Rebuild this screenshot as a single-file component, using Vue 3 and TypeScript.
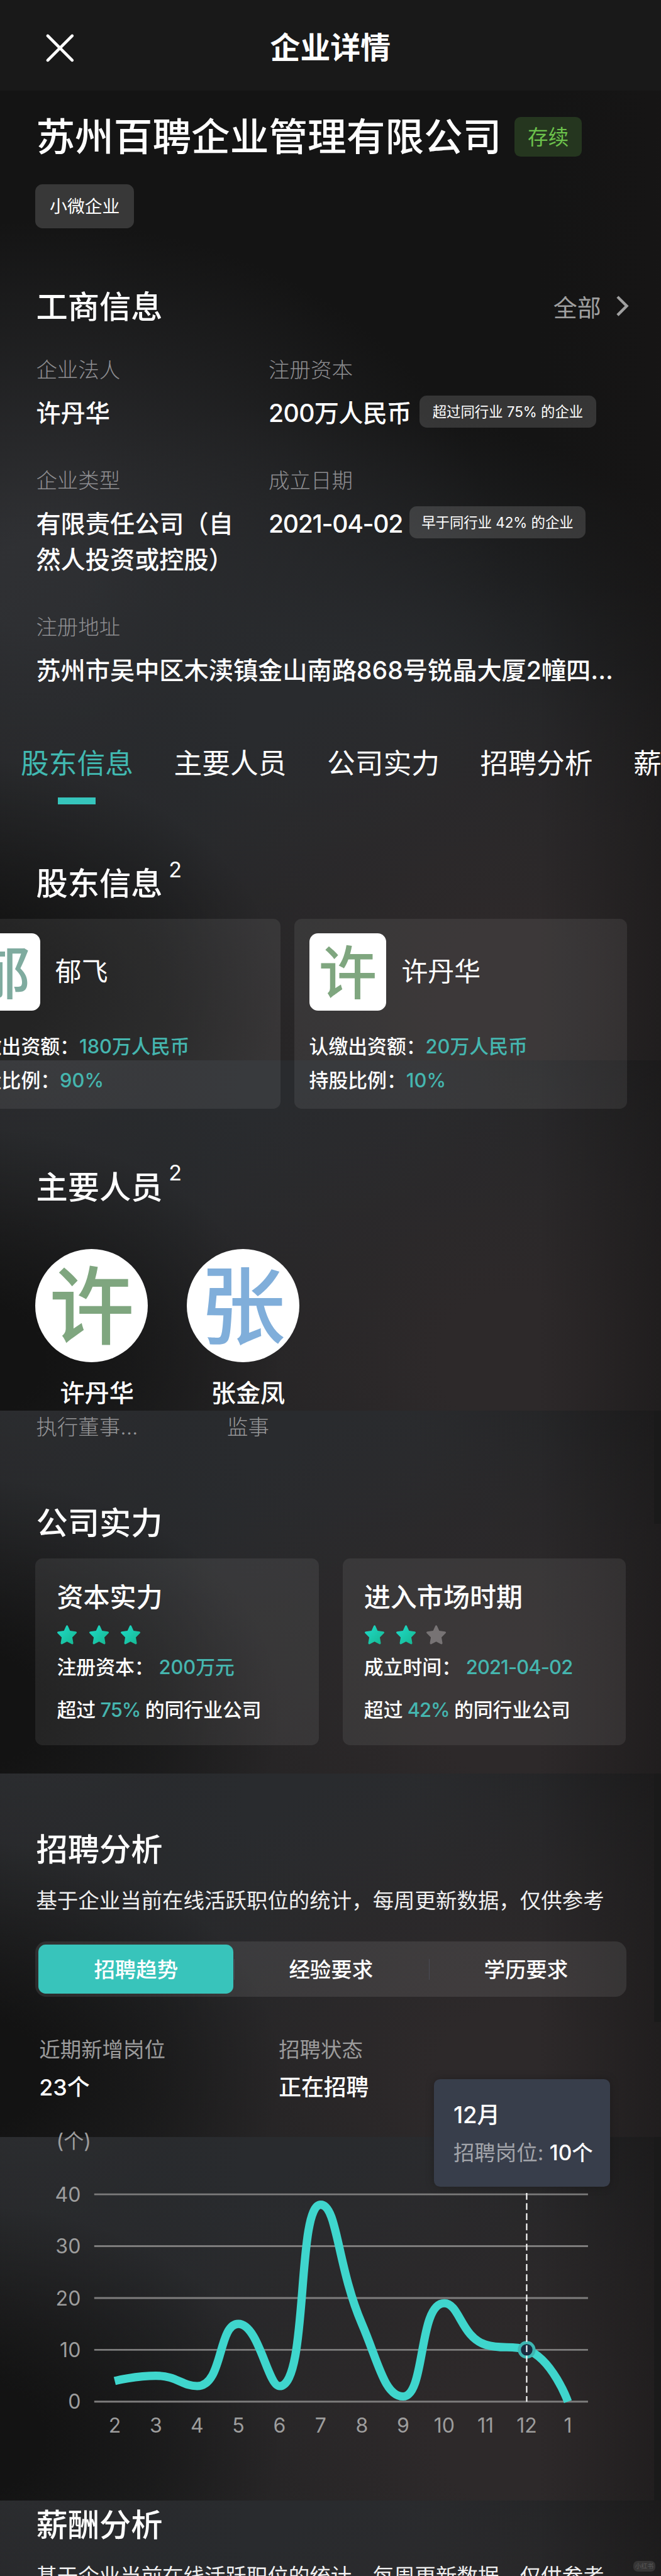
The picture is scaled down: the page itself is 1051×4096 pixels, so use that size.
<script setup lang="ts">
interface Person { name: string; role: string; initial: string; color: string; clipped: boolean }
interface Holder { name: string; initial: string; color: string; amount: string; ratio: string }
interface Strength { title: string; stars: boolean[]; label: string; value: string; percent: string; date: boolean }

const tabs = ['股东信息', '主要人员', '公司实力', '招聘分析', '薪酬分析']

const holders: Holder[] = [
  { name: '郁飞', initial: '郁', color: '#7fab9f', amount: '180万人民币', ratio: '90%' },
  { name: '许丹华', initial: '许', color: '#7fa67f', amount: '20万人民币', ratio: '10%' },
]

const people: Person[] = [
  { name: '许丹华', role: '执行董事...', initial: '许', color: '#7fa67f', clipped: true },
  { name: '张金凤', role: '监事', initial: '张', color: '#80aeda', clipped: false },
]

const strengths: Strength[] = [
  { title: '资本实力', stars: [true, true, true], label: '注册资本：', value: '200万元', percent: '75%', date: false },
  { title: '进入市场时期', stars: [true, true, false], label: '成立时间：', value: '2021-04-02', percent: '42%', date: true },
]

const segments = ['招聘趋势', '经验要求', '学历要求']

const months = ['2', '3', '4', '5', '6', '7', '8', '9', '10', '11', '12', '1']
const values = [4, 5, 3, 15, 3, 38, 15, 1, 19, 11, 10, 0]
const ticks = [40, 30, 20, 10, 0]

const baseY = 488
const unit = 8.47
const monthX = (i: number): number => 187.5 + i * 67.33
const valueY = (v: number): number => baseY - v * unit

const clamp = (v: number, a: number, b: number): number =>
  Math.min(Math.max(v, Math.min(a, b)), Math.max(a, b))

// Smooth cubic path whose control points never overshoot the neighbouring values
function smoothPath(points: [number, number][], smooth = 0.5): string {
  let d = `M${points[0][0]} ${points[0][1]}`
  let [c0x, c0y] = points[0]
  for (let i = 1; i < points.length; i++) {
    const [px, py] = points[i - 1]
    const [x, y] = points[i]
    let c1x = x
    let c1y = y
    let n0x = x
    let n0y = y
    if (i < points.length - 1) {
      const [nx, ny] = points[i + 1]
      const prev = Math.hypot(x - px, y - py)
      const next = Math.hypot(nx - x, ny - y)
      const ratio = next / (next + prev)
      n0x = clamp(x + (nx - px) * smooth * ratio, nx, x)
      n0y = clamp(y + (ny - py) * smooth * ratio, ny, y)
      c1x = clamp(x - ((n0x - x) * prev) / next, px, x)
      c1y = clamp(y - ((n0y - y) * prev) / next, py, y)
      n0x = x + ((x - c1x) * next) / prev
      n0y = y + ((y - c1y) * next) / prev
    }
    d += `C${c0x} ${c0y} ${c1x} ${c1y} ${x} ${y}`
    c0x = n0x
    c0y = n0y
  }
  return d
}

const trend = smoothPath(values.map((v, i) => [monthX(i), valueY(v)] as [number, number]))
</script>

<template>
  <div class="page">
    <div class="backdrop" aria-hidden="true">
      <div class="scene scene-top"></div>
      <div class="scene scene-a"></div>
      <div class="scene scene-b"><i class="edge edge-short"></i></div>
      <div class="scene scene-b"><i class="edge edge-mid"></i></div>
      <div class="scene scene-b"><i class="edge"></i></div>
      <div class="scene scene-end"></div>
    </div>

    <header class="bar">
      <svg class="close" viewBox="0 0 48 48"><path d="M4 4L44 44M44 4L4 44" /></svg>
      <h1>企业详情</h1>
    </header>

    <main>
      <div class="company">
        <span class="company-name">苏州百聘企业管理有限公司</span>
        <span class="status">存续</span>
      </div>
      <div class="tag">小微企业</div>

      <div class="heading heading-info">
        <h2>工商信息</h2>
        <span class="more">全部
          <svg viewBox="0 0 22 34"><path d="M3 2L18 17L3 32" /></svg>
        </span>
      </div>

      <div class="info">
        <div class="cell">
          <div class="label">企业法人</div>
          <div class="value">许丹华</div>
        </div>
        <div class="cell">
          <div class="label">注册资本</div>
          <div class="value with-pill"><span class="capital">200万人民币</span><span class="pill">超过同行业 75% 的企业</span></div>
        </div>
        <div class="cell">
          <div class="label">企业类型</div>
          <div class="value">有限责任公司（自<br>然人投资或控股）</div>
        </div>
        <div class="cell">
          <div class="label">成立日期</div>
          <div class="value with-pill"><span class="founded">2021-04-02</span><span class="pill">早于同行业 42% 的企业</span></div>
        </div>
        <div class="cell wide">
          <div class="label">注册地址</div>
          <div class="value nowrap">苏州市吴中区木渎镇金山南路868号锐晶大厦2幢四...</div>
        </div>
      </div>

      <nav class="tabs">
        <span v-for="(tab, i) in tabs" :key="tab" class="tab" :class="{ active: i === 0 }">{{ tab }}</span>
      </nav>

      <div class="heading heading-next"><h2>股东信息</h2><sup>2</sup></div>
      <div class="holders">
        <div v-for="h in holders" :key="h.name" class="card holder">
          <div class="holder-top">
            <span class="square" :style="{ color: h.color }">{{ h.initial }}</span>
            <span class="holder-name">{{ h.name }}</span>
          </div>
          <div class="holder-rows">
            <div>认缴出资额：<em>{{ h.amount }}</em></div>
            <div>持股比例：<em>{{ h.ratio }}</em></div>
          </div>
        </div>
      </div>

      <div class="heading heading-next"><h2>主要人员</h2><sup>2</sup></div>
      <div class="people">
        <div v-for="p in people" :key="p.name" class="person">
          <span class="circle" :style="{ color: p.color }">{{ p.initial }}</span>
          <span class="person-name">{{ p.name }}</span>
          <span class="role" :class="{ clipped: p.clipped }">{{ p.role }}</span>
        </div>
      </div>

      <div class="heading heading-next"><h2>公司实力</h2></div>
      <div class="strengths">
        <div v-for="s in strengths" :key="s.title" class="card strength">
          <h3>{{ s.title }}</h3>
          <div class="stars">
            <svg v-for="(on, i) in s.stars" :key="i" :class="{ off: !on }" viewBox="0 0 34 32">
              <defs>
                <linearGradient id="star-fill" x1="0" y1="0" x2="1" y2="1">
                  <stop offset="0" stop-color="#1fdccb" />
                  <stop offset="1" stop-color="#16b68f" />
                </linearGradient>
              </defs>
              <path d="M15.6 1.2Q17 -.8 18.400 1.200L22 9.300L31.300 10.600Q34 11.300 32.300 13.400L25.700 20L27.300 29.200Q27.400 32 24.800 31L17 27L9.200 31Q6.600 32 6.700 29.200L8.300 20L1.700 13.400Q0 11.300 2.700 10.600L12 9.300Z" />
            </svg>
          </div>
          <div class="line">{{ s.label }}<em class="spaced" :class="{ date: s.date }">{{ s.value }}</em></div>
          <div class="line line-last">超过 <em>{{ s.percent }}</em> 的同行业公司</div>
        </div>
      </div>

      <div class="heading heading-jobs"><h2>招聘分析</h2></div>
      <p class="note">基于企业当前在线活跃职位的统计，每周更新数据，仅供参考</p>
      <div class="segmented">
        <span v-for="(s, i) in segments" :key="s" :class="{ on: i === 0 }">{{ s }}</span>
      </div>

      <div class="stats">
        <div>
          <div class="stat-label">近期新增岗位</div>
          <div class="stat-value">23个</div>
        </div>
        <div>
          <div class="stat-label">招聘状态</div>
          <div class="stat-value">正在招聘</div>
        </div>
      </div>

      <div class="chart">
        <svg width="1080" height="554" viewBox="0 0 1080 554">
          <text class="axis" x="92" y="74">(个)</text>
          <g v-for="t in ticks" :key="t">
            <line class="rule" x1="154" x2="961" :y1="valueY(t)" :y2="valueY(t)" />
            <text class="axis" text-anchor="end" x="132" :y="valueY(t) + 12">{{ t }}</text>
          </g>
          <text v-for="(m, i) in months" :key="m" class="axis" text-anchor="middle" :x="monthX(i)" y="539">{{ m }}</text>
          <path class="trend" :d="trend" />
          <circle class="dot" :cx="monthX(10)" :cy="valueY(10)" r="12" />
          <line class="pointer" :x1="monthX(10)" :x2="monthX(10)" y1="147" y2="488" />
        </svg>
        <div class="tooltip">
          <div class="tip-title">12月</div>
          <div class="tip-row">招聘岗位: <b>10个</b></div>
        </div>
      </div>

      <div class="heading heading-pay"><h2>薪酬分析</h2></div>
      <p class="note">基于企业当前在线活跃职位的统计，每周更新数据，仅供参考</p>
    </main>
    <span class="watermark">小红书</span>
  </div>
</template>

<style>
html, body { margin: 0; background: #141414; overflow: hidden; }
</style>

<style scoped>
.page {
  zoom: 0.9729;
  position: relative;
  height: 4210px;
  overflow: hidden;
  background: #141414;
  color: #fff;
  font-family: Inter, "Noto Sans CJK SC", sans-serif;
  font-weight: 400;
}
h1, h2, h3, p { margin: 0; font-weight: 500; }
em, b { font-style: normal; font-weight: inherit; }
.backdrop { position: absolute; inset: 0; display: flex; flex-direction: column; }
.scene {
  position: relative;
  flex: none;
  background-color: #141414;
  background-image:
    radial-gradient(ellipse 520px 380px at -60px 1620px, #131313 25%, rgba(19, 19, 19, 0)),
    linear-gradient(90deg, rgba(24, 22, 22, 0) 880px, rgba(24, 22, 22, .55) 1080px),
    radial-gradient(ellipse 620px 560px at 840px 1620px, #2d292a 20%, rgba(45, 41, 42, 0)),
    radial-gradient(ellipse 720px 520px at 540px 1180px, #292b2e 20%, rgba(41, 43, 46, 0)),
    radial-gradient(ellipse 760px 600px at 60px 960px, #303134 12%, rgba(48, 49, 52, 0)),
    linear-gradient(180deg, rgba(34, 34, 35, 0) 950px, #222223 1350px);
  background-size: 1080px 1760px;
  background-repeat: no-repeat;
  background-position: 0 -1130px;
}
.scene-top { height: 1733px; background-position: 0 0; }
.scene-a { height: 572px; }
.scene-b { height: 594px; }
.scene-end { height: 124px; }
.edge { position: absolute; right: 0; top: 0; width: 11px; height: 100%; background: #1a1a1a; }
.edge-short { height: 185px; }
.edge-mid { height: 406px; }

.bar {
  position: relative;
  height: 148px;
  padding-top: 9px;
  box-sizing: border-box;
  display: flex;
  align-items: center;
  background: #191919;
}
.close { width: 48px; height: 48px; margin-left: 74px; fill: none; stroke: #fff; stroke-width: 4.800; stroke-linecap: round; }
.bar h1 { width: 836px; text-align: center; font-size: 49.200px; line-height: 60px; font-weight: 600; }

main { position: relative; padding: 43px 56px 0 59px; }
.company { display: flex; align-items: center; height: 65px; }
.company-name { font-size: 63.400px; font-weight: 500; width: 782px; white-space: nowrap; line-height: 67px; }
.status { width: 110px; height: 65px; line-height: 66px; text-align: center; font-size: 33.500px; color: #6cc24c; background: #25361f; border-radius: 10px; }
.tag { margin: 45px 0 0 -1px; width: 161px; height: 72px; line-height: 73px; text-align: center; font-size: 28.600px; background: #383838; border-radius: 12px; }

.heading { display: flex; height: 60px; align-items: center; }
.heading h2 { font-size: 51.700px; line-height: 60px; padding-top: 3px; }
.heading sup { font-size: 35px; line-height: 40px; vertical-align: baseline; margin: 0 0 42px 10px; font-weight: 400; }
.heading-info { margin-top: 97px; justify-content: space-between; }
.heading-next { margin-top: 97px; }
.more { display: flex; align-items: center; gap: 24px; font-size: 39px; color: #a0a0a0; margin-right: -4px; }
.more svg { width: 22px; height: 34px; fill: none; stroke: #a0a0a0; stroke-width: 4.500; }

.info { display: grid; grid-template-columns: 380px 1fr; row-gap: 61px; margin-top: 55px; }
.wide { grid-column: 1 / 3; }
.label { font-size: 34.400px; line-height: 40px; color: #8f8f92; font-weight: 300; }
.value { font-size: 40.300px; line-height: 58px; margin-top: 22px; font-weight: 500; }
.nowrap { white-space: nowrap; }
.with-pill { display: flex; }
.capital { width: 247px; white-space: nowrap; letter-spacing: -.7px; }
.founded { width: 230px; white-space: nowrap; letter-spacing: -1.400px; }
.pill { height: 52px; line-height: 53px; margin-top: 0; width: 288px; text-align: center; font-size: 23px; font-weight: 400; white-space: nowrap; background: rgba(255, 255, 255, .14); border-radius: 12px; }

.tabs { display: flex; gap: 66.300px; margin: 93px -56px 0 -25px; overflow: hidden; height: 98px; }
.tab { position: relative; flex: none; font-size: 46px; line-height: 61px; white-space: nowrap; }
.active { color: #41b9b1; }
.active::after { content: ""; position: absolute; left: 61px; top: 85px; width: 61px; height: 12px; background: #36c5bc; }

.card { background: rgba(255, 255, 255, .075); border-radius: 12px; box-sizing: border-box; }
.holders { display: flex; justify-content: flex-end; gap: 23px; margin: 29px 0 0 -59px; overflow: hidden; }
.holder { flex: none; width: 543px; height: 310px; padding: 23px 24px; }
.holder-top { display: flex; align-items: center; gap: 25px; }
.square { width: 126px; height: 127px; line-height: 130px; text-align: center; border-radius: 14px; background: #fff; font-size: 95px; font-weight: 500; }
.holder-name { font-size: 43px; line-height: 60px; }
.holder-rows { margin-top: 31px; font-size: 31.700px; line-height: 55.500px; white-space: nowrap; font-weight: 500; }
.holder-rows em, .line em { color: #45b6af; }

.people { display: flex; gap: 46px; margin: 73px 0 0 -1px; }
.person { width: 201px; display: flex; flex-direction: column; }
.circle { width: 184px; height: 185px; line-height: 190px; text-align: center; border-radius: 50%; background: #fff; font-size: 139px; font-weight: 500; }
.person-name { margin-top: 22px; font-size: 40.300px; line-height: 56px; text-align: center; font-weight: 500; }
.role { font-size: 34.400px; line-height: 56px; text-align: center; color: #959597; font-weight: 300; }
.clipped { text-align: left; padding-left: 1px; }

.strengths { display: flex; gap: 39px; margin: 29px 0 0 -1px; }
.strength { width: 463px; height: 306px; padding: 39px 35px; white-space: nowrap; }
.strength h3 { font-size: 43.200px; line-height: 50px; font-weight: 500; }
.stars { display: flex; gap: 17.500px; margin-top: 20px; height: 32px; }
.stars svg { width: 34px; height: 32px; fill: url(#star-fill); }
.stars .off { fill: #777374; margin-left: -2px; }
.line { margin-top: 18px; font-size: 31.700px; line-height: 40px; font-weight: 500; }
.line-last { margin-top: 29px; word-spacing: -1px; }
.line-last em { letter-spacing: -1px; }
.spaced { margin-left: 8px; }
.date { letter-spacing: -.9px; }

.heading-jobs { margin-top: 139px; }
.note { margin-top: 30px; font-size: 34.400px; line-height: 50px; font-weight: 400; color: #f0f0f0; white-space: nowrap; }
.segmented { display: flex; margin: 41px 0 0 -1px; width: 966px; height: 91px; padding: 5px; box-sizing: border-box; border-radius: 18px; background: rgba(255, 255, 255, .09); }
.segmented span { position: relative; flex: 1; height: 81px; line-height: 84px; text-align: center; font-size: 34.400px; font-weight: 500; border-radius: 12px; }
.segmented .on { background: #38c4bb; }
.segmented span + span::before { content: ""; position: absolute; left: 1px; top: 24px; height: 34px; width: 1px; background: #4a4b55; }

.stats { display: flex; margin-top: 65px; padding-left: 5px; }
.stats > div { width: 391.500px; }
.stat-label { font-size: 34.400px; line-height: 44px; color: #9b9b9b; }
.stat-value { margin-top: 14px; font-size: 36.800px; line-height: 50px; font-weight: 500; }

.chart { position: relative; height: 554px; margin: 0 -56px 0 -59px; }
.chart svg { display: block; }
.axis { font-size: 33px; fill: #9d9d9d; }
.rule { stroke: #7d7c7c; stroke-width: 3; }
.trend { fill: none; stroke: #3fd6cd; stroke-width: 13.500; }
.dot { fill: #1b2b40; stroke: #3eb6b2; stroke-width: 5; }
.pointer { stroke: #fff; stroke-width: 2.200; stroke-dasharray: 11 5.600; }
.tooltip { position: absolute; left: 709px; top: -39px; width: 288px; height: 176px; padding: 34px 0 0 32px; box-sizing: border-box; border-radius: 10px; background: #383e4b; box-shadow: 0 0 14px rgba(0, 0, 0, .25); white-space: nowrap; }
.tip-title { font-size: 37.500px; line-height: 50px; font-weight: 500; }
.tip-row { margin-top: 12px; font-size: 34.400px; line-height: 50px; color: #a2a4aa; }
.tip-row b { color: #fff; font-weight: 500; }

.heading-pay { margin-top: 105px; }
.watermark { position: absolute; left: 1035px; top: 4185px; width: 36px; height: 18px; border-radius: 7px; background: #363535; color: #5a5959; font-size: 10px; line-height: 18px; text-align: center; }
</style>
